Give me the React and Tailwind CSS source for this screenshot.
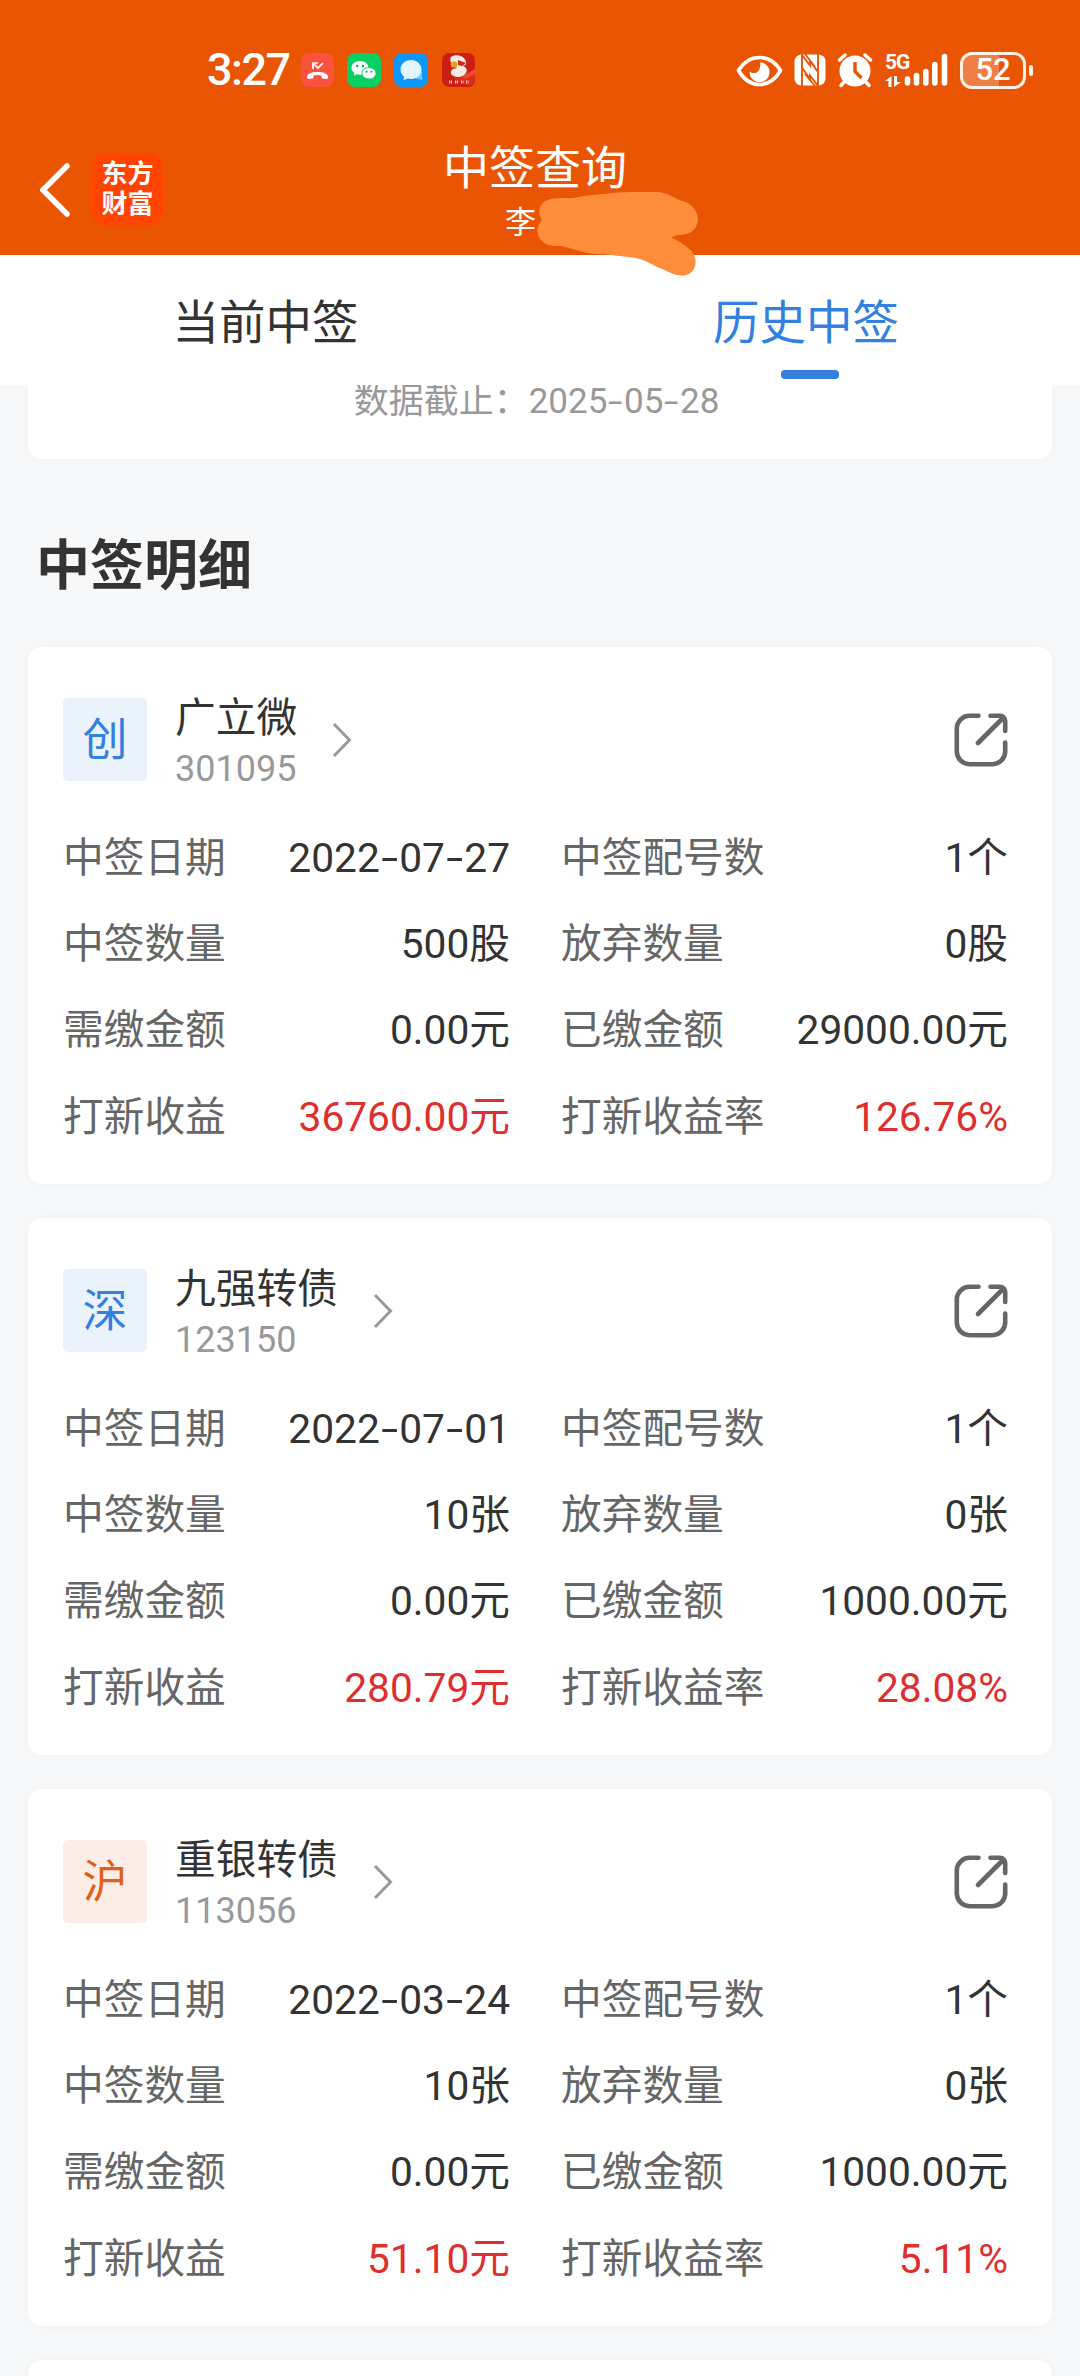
import React from 'react';

const records = [
  {
    market: '创',
    name: '广立微',
    code: '301095',
    date: '2022-07-27',
    count: '1个',
    amount: '500股',
    abandoned: '0股',
    due: '0.00元',
    paid: '29000.00元',
    profit: '36760.00元',
    rate: '126.76%',
  },
  {
    market: '深',
    name: '九强转债',
    code: '123150',
    date: '2022-07-01',
    count: '1个',
    amount: '10张',
    abandoned: '0张',
    due: '0.00元',
    paid: '1000.00元',
    profit: '280.79元',
    rate: '28.08%',
  },
  {
    market: '沪',
    name: '重银转债',
    code: '113056',
    date: '2022-03-24',
    count: '1个',
    amount: '10张',
    abandoned: '0张',
    due: '0.00元',
    paid: '1000.00元',
    profit: '51.10元',
    rate: '5.11%',
  },
];

const StatusBar = () => (
  <div className="h-[140px] pl-[207px] flex items-center text-white">
    <span className="w-[94px] text-[45px] leading-[50px] font-medium tracking-[-1.5px]">3:27</span>
    {/* Notification icons */}
    <svg className="w-[33px] h-[34px]" viewBox="0 0 33 34">
      <rect width="33" height="34" rx="8" fill="#fb5240" />
      <path d="M12 16V10h5M12 10l5 5 5-5" fill="none" stroke="#fff" strokeWidth="1.7" />
      <path d="M6 24c0-3 4-5 10.500-5s10.500 2 10.500 5c0 1-.5 2-1.500 2l-4-.5c-1-.2-1-1.500-1-3-2-.7-6-.7-8 0 0 1.500 0 2.800-1 3l-4 .5c-1 0-1.500-1-1.500-2z" fill="#fff" />
    </svg>
    <svg className="w-[34px] h-[34px] ml-[13px]" viewBox="0 0 34 34">
      <rect width="34" height="34" rx="8" fill="#08cf63" />
      <path d="M13 8c-5 0-8.500 3-8.500 6.800 0 2.200 1.200 4 3 5.200l-.7 2.800 3-1.500c1 .3 2 .5 3.200.5 5 0 8.500-3.100 8.500-7S18 8 13 8z" fill="#fff" />
      <path d="M22 14.500c-4.200 0-7 2.600-7 5.800s2.800 5.700 7 5.700c.9 0 1.800-.1 2.600-.4l2.500 1.300-.6-2.300c1.500-1 2.500-2.600 2.500-4.300 0-3.200-2.800-5.800-7-5.800z" fill="#fff" stroke="#08cf63" strokeWidth="1" />
      <circle cx="10.200" cy="13" r="1.200" fill="#08a851" />
      <circle cx="16" cy="13" r="1.200" fill="#08a851" />
      <circle cx="19.600" cy="18.700" r="1" fill="#08a851" />
      <circle cx="24.400" cy="18.700" r="1" fill="#08a851" />
    </svg>
    <svg className="w-[34px] h-[34px] ml-[13px]" viewBox="0 0 34 34">
      <rect width="34" height="34" rx="8" fill="#0b96fb" />
      <path d="M22 19h6v5l1 3-4-.8c-3 0-5-2-5-4z" fill="#6cc6ff" />
      <path d="M17 7C11 7 6.500 11.200 6.500 16.500c0 3 1.400 5.500 3.500 7.200L9.500 27l4.500-1.400c1 .3 2 .4 3 .4 6 0 10.500-4.200 10.500-9.500S23 7 17 7z" fill="#e3f5ff" />
    </svg>
    <svg className="w-[33px] h-[34px] ml-[14px]" viewBox="0 0 33 34">
      <rect width="33" height="34" rx="7" fill="#cc1f12" />
      <path d="M33 16v9a8 8 0 0 1-8 8L12 26z" fill="#d92c1c" />
      <path d="M20 24l13-8v5l-10 5z" fill="#f24a35" />
      <path d="M9 4c5-4 14-1 15 5 1 3-2 4-5 3.500 5 .5 7 4 5 7.500-3 5-11 5-14 2-2-2-1-5 1-6l4-1C10 13 7 8 9 4z" fill="#f4ece4" />
      <path d="M16 7l8 3-4 3-4-1z" fill="#d1261a" />
      <circle cx="12" cy="11.500" r="3.300" fill="#e3a021" />
      <path d="M7 29h3M13 29h3M19 29h2.500M24 29h2.500" stroke="#f7c9bf" strokeWidth="3" strokeDasharray="1.300 .7" />
    </svg>

    {/* System icons */}
    <svg className="w-[47px] h-[34px] ml-[261px]" viewBox="0 0 47 34">
      <path d="M2.500 17.500C8 8.500 15 4.500 23.500 4.500S39 8.500 44.500 17.500C39 27 32 31.500 23.500 31.500S8 27 2.500 17.500z" fill="none" stroke="#fff" strokeWidth="3.600" strokeLinejoin="round" />
      <path d="M24.500 9.200A10 10 0 1 1 13.600 18.500c3 2.600 8 1.700 9.600-1.600 1.400-3 .9-5.700 1.300-7.700z" fill="#fff" />
    </svg>
    <svg className="w-[32px] h-[34px] ml-[11px]" viewBox="0 0 32 34">
      <rect x=".5" y="1.500" width="31" height="31" rx="7" fill="#fff" />
      <path
        d="M8 33V2L16 12.500V8L24 19V1M24 1V33L16 22.500V26L8 14.500M11 1L21 14M11 21l10 12"
        fill="none"
        stroke="#ea5504"
        strokeWidth="1.900"
      />
    </svg>
    <svg className="w-[36px] h-[36px] ml-[11px]" viewBox="0 0 36 36">
      <path d="M2.500 8l5.500-5M33.500 8L28 3M8 29l-4 4.500M28 29l4 4.500" stroke="#fff" strokeWidth="3.500" strokeLinecap="round" />
      <circle cx="18" cy="19" r="15.500" fill="#fff" />
      <path d="M18 10v9.500l6.500 6.500" fill="none" stroke="#ea5504" strokeWidth="3.400" />
    </svg>
    <div className="ml-[12px] w-[18px] flex flex-col gap-[5px]">
      <span className="text-[21px] leading-[18px] font-bold tracking-[-1px]">5G</span>
      <svg className="w-[16px] h-[11px]" viewBox="0 0 16 11">
        <path d="M6.500 0v11H3.500V5H0zM9 0h3v6H16l-7 5z" fill="#fff" />
      </svg>
    </div>
    <svg className="w-[45px] h-[34px]" viewBox="0 0 45 34">
      <path d="M4.500 26v4M13.500 22.500v7.500M22.800 18.500V30M31.800 11.500V30M41.500 3.500V30" stroke="#fff" strokeWidth="5.600" strokeLinecap="round" />
    </svg>
    <div className="ml-[12px] w-[66px] h-[37px] rounded-[12px] border-[3px] border-white/90 flex items-center justify-center bg-linear-to-r from-white/25 from-[60%] to-transparent to-[60%]">
      <span className="text-[31px] leading-[30px] font-medium">52</span>
    </div>
    <div className="ml-[3px] w-[4px] h-[11px] rounded-full bg-white/90"></div>
  </div>
);

const Header = () => (
  <header className="relative h-[255px] bg-[#ea5504]">
    <StatusBar />
    <div className="h-[115px] pl-[40px] flex">
      <svg className="mt-[23px] w-[30px] h-[54px]" viewBox="0 0 30 54">
        <path d="M27 3L3 27l24 24" fill="none" stroke="#fff" strokeWidth="5.500" strokeLinecap="round" strokeLinejoin="miter" />
      </svg>
      <div className="mt-[13px] ml-[22px] w-[71px] h-[72px] rounded-[14px] bg-[#ff4400] flex flex-col justify-center items-center text-white text-[26px] leading-[30px] font-bold">
        <span>东方</span>
        <span>财富</span>
      </div>
      <div className="ml-[280px] w-[184px] flex flex-col text-white">
        <h1 className="mt-[1px] text-[46px] leading-[54px] whitespace-nowrap">中签查询</h1>
        <span className="ml-[62px] mt-[10px] text-[31px] leading-[36px]">李</span>
      </div>
    </div>
    {/* Marker stroke over the account name */}
    <svg className="absolute left-[530px] top-[185px] w-[175px] h-[95px] z-10" viewBox="530 185 175 95">
      <path
        d="M551 199C560 197 570 199 579 197C592 194 600 195 612 193C622 192 630 192 657 192C668 192 674 199 686 202C694 206 698 213 698 220C697 230 690 234 681 235C674 235 674 237 671 237.500C678 240 683 244 688 248C694 252 697 260 695 266C693 273 687 276 681 275.500C672 275 667 270 657 267C648 262 641 258 628 257C619 256 611 255 603 254C592 255 584 252 576 250C570 249 567 247 561 246C552 246 546 246 541 240C535 233 537 225 542 220C536 211 540 201 551 199z"
        fill="#ff8d3b"
      />
    </svg>
  </header>
);

const Tabs = () => (
  <nav className="h-[130px] bg-white grid grid-cols-2 text-[46.500px] text-[#333333]">
    <div className="flex justify-center">
      <span className="mt-[38px] mr-[9px] leading-[60px]">当前中签</span>
    </div>
    <div className="flex flex-col items-center text-[#3380df]">
      <span className="mt-[38px] mr-[8px] leading-[60px]">历史中签</span>
      <div className="mt-[17px] w-[58px] h-[9px] rounded-[4px] bg-[#3380df]"></div>
    </div>
  </nav>
);

// Date with wide hyphens
const DateText = ({ value }) =>
  value.split('-').map((part, i) => (
    <React.Fragment key={i}>
      {i > 0 && <span className="inline-block w-[0.476em] text-center scale-x-150">-</span>}
      {part}
    </React.Fragment>
  ));

const Field = ({ label, value, red }) => (
  <div className="flex items-center justify-between whitespace-nowrap">
    <span className="text-[#666666]">{label}</span>
    <span className={red ? 'text-[#de2f2f]' : 'text-[#333333]'}>{value}</span>
  </div>
);

const RecordCard = ({ record }) => (
  <div className="h-[537px] shrink-0 rounded-[14px] bg-white shadow-[0_0_16px_rgba(0,0,0,0.03)] pt-[51px] pl-[35px] pr-[44px]">
    <div className="h-[83px] flex items-center">
      <div
        className={`w-[84px] h-[83px] pt-[3px] rounded-[5px] flex items-center justify-center text-[45px] ${
          record.market === '沪' ? 'bg-[#fceee6] text-[#e0601a]' : 'bg-[#eaf2fc] text-[#3380df]'
        }`}
      >
        {record.market}
      </div>
      <div className="ml-[28px] pt-[3px] flex flex-col">
        <span className="text-[40.700px] leading-[56px] text-[#333333]">{record.name}</span>
        <span className="text-[36px] leading-[46px] text-[#999999]">{record.code}</span>
      </div>
      <svg className="ml-[35px] w-[20px] h-[36px]" viewBox="0 0 20 36">
        <path d="M2 2l15.500 16L2 34" fill="none" stroke="#999" strokeWidth="3" />
      </svg>
      <svg className="ml-auto w-[54px] h-[54px]" viewBox="0 0 54 54">
        <path
          d="M24.500 2.800H15.500A12.700 12.700 0 0 0 2.800 15.500V38.500A12.700 12.700 0 0 0 15.500 51.200H38.500A12.700 12.700 0 0 0 51.200 38.500V29.500M36.500 2.800H46a5.200 5.200 0 0 1 5.200 5.200V18M49.500 4.500L24 30"
          fill="none"
          stroke="#666"
          strokeWidth="4.600"
          strokeLinecap="round"
        />
      </svg>
    </div>
    <div className="mt-[34px] grid grid-cols-2 gap-x-[51px] auto-rows-[86.300px] text-[40.700px]">
      <Field label="中签日期" value={<DateText value={record.date} />} />
      <Field label="中签配号数" value={record.count} />
      <Field label="中签数量" value={record.amount} />
      <Field label="放弃数量" value={record.abandoned} />
      <Field label="需缴金额" value={record.due} />
      <Field label="已缴金额" value={record.paid} />
      <Field label="打新收益" value={record.profit} red />
      <Field label="打新收益率" value={record.rate} red />
    </div>
  </div>
);

const App = () => {
  return (
    <div className="w-[1080px] h-[2376px] overflow-hidden flex flex-col bg-[#f7f8fa] font-['Roboto','Noto_Sans_CJK_SC',sans-serif]">
      <Header />
      <Tabs />
      <main className="px-[28px] flex-1 min-h-0 overflow-hidden flex flex-col">
        {/* Tail of the summary card, scrolled under the tabs */}
        <div className="h-[74px] shrink-0 rounded-b-[14px] bg-white shadow-[0_0_16px_rgba(0,0,0,0.03)] text-center text-[35px] leading-[33px] text-[#999999] pr-[7px]">
          数据截止：<DateText value="2025-05-28" />
        </div>
        <h2 className="mt-[73px] mb-[45px] ml-[8px] text-[54px] leading-[70px] font-bold text-[#333333]">中签明细</h2>
        <div className="flex flex-col gap-[34px]">
          {records.map((record) => (
            <RecordCard key={record.code} record={record} />
          ))}
          <div className="h-[537px] shrink-0 rounded-[14px] bg-white shadow-[0_0_16px_rgba(0,0,0,0.03)]"></div>
        </div>
      </main>
    </div>
  );
};

export default App;
